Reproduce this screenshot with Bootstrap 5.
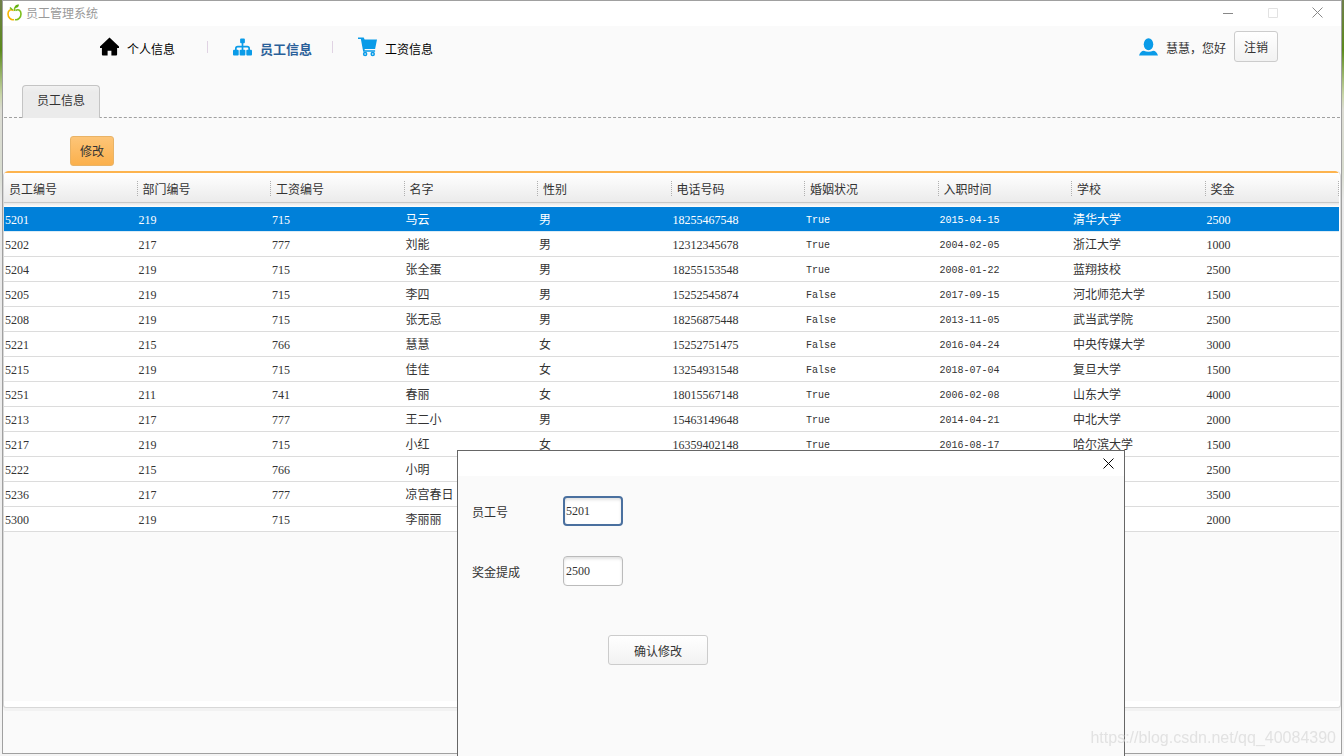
<!DOCTYPE html>
<html lang="zh-CN">
<head>
<meta charset="utf-8">
<meta name="viewport" content="width=device-width, initial-scale=1">
<title>员工管理系统</title>
<link href="https://cdn.jsdelivr.net/npm/bootstrap@5.3.0/dist/css/bootstrap.min.css" rel="stylesheet">
<style>
  body {
    font: 12px/16px "Noto Sans CJK SC", sans-serif;
    color: #333;
    background: linear-gradient(#6f7f4a 0, #5b8a1c 50px, #c9d6a8 95px, #dcdcd4 110px, #d8dccf 170px, #e9e9e9 200px, #f4f4f4 100%);
    padding: 0 2px 2px;
  }
  .app-window { min-height: calc(100vh - 2px); background: #fafafa; border: 1px solid #a0a0a0; }
  .title-bar { height: 25px; background: #fff; color: #999; padding: 0 1px 2px 4px; }
  .win-btn { width: 45px; height: 24px; border: 0; background: none; padding: 0; display: flex; align-items: center; justify-content: center; }
  .top-bar { padding: 5px 63px 0 97px; }
  .main-nav a { color: #000; text-decoration: none; }
  .main-nav .current { color: #2a6099; font-size: 13px; font-weight: 700; }
  .main-nav svg, .user-box svg { flex: none; width: 19px; height: 20px; }
  .main-nav span { padding-top: 5px; }
  .user-box span { padding-top: 2px; }
  .nav-sep { width: 1px; height: 12px; background: #e0d3e3; }
  .nav-sep.wide { margin: 0 25px 0 32px; }
  .nav-sep.tight { margin: 0 25px 0 20px; }
  .btn-soft, .btn-soft:hover {
    font-size: 12px; line-height: 17px; padding: 6px 9px; color: #333;
    border: 1px solid #ccc; border-radius: 3px; background: linear-gradient(#fff, #f2f2f2);
  }
  .btn-edit, .btn-edit:hover {
    font-size: 12px; line-height: 16px; padding: 6px 9px; color: #333;
    border: 1px solid #e9b366; border-radius: 3px; background: linear-gradient(#fdc578, #fbb04c);
  }
  .tab-strip { margin: 23px 1px 0; padding-left: 18px; border-bottom: 1px dashed #a0a0a0; }
  .page-tab {
    position: relative; height: 33px; margin-bottom: -1px; padding: 6px 14px 0; color: #333; text-decoration: none;
    background: linear-gradient(#f2f2f2, #ebebeb 6px); border: 1px solid #c4c4c4; border-bottom: 0; border-radius: 4px 4px 0 0;
  }
  .tool-row { padding: 18px 67px 5px; }
  .grid-panel { background: #fff; border: 1px solid #d8d8d8; border-top: 0; border-radius: 5px 5px 3px 3px; box-shadow: 0 3px 0 #f2f2f2; padding: 0 1px 6px 0; overflow: hidden; }
  .grid-body { min-height: 530px; background: #fafafa; }
  .staff-grid { width: 100%; table-layout: fixed; border-collapse: separate; border-spacing: 0; border-top: 2px solid #fdb44f; border-radius: 4px 4px 0 0; }
  .staff-grid th {
    height: 34px; padding: 0 0 3px 5px; font-weight: 400;
    background:
      repeating-linear-gradient(#b0b0b0 0 1px, transparent 1px 2px) right 8px / 1px 15px no-repeat,
      linear-gradient(#fff, #ebebeb 29px, #c8c8c8 29px, #c8c8c8 30px, #e6e6e6 30px, #fff 34px);
  }
  .staff-grid td {
    height: 25px; padding: 2px 1px 0; white-space: nowrap; background: #fff; border-bottom: 1px solid #dcdcdc;
    font-family: "Liberation Serif", "Noto Sans CJK SC", serif;
  }
  .staff-grid td:nth-child(7), .staff-grid td:nth-child(8) { padding-top: 4px; font-family: "Liberation Mono", monospace; font-size: 10px; }
  .staff-grid .picked td { background: #0080d9; color: #fff; border-bottom-color: #dcecf6; }
  .edit-dialog { position: fixed; left: 34%; top: 450px; bottom: 0; width: 668px; background: #fafafa; border: 1px solid #666; border-bottom: 0; }
  .edit-head { height: 25px; background: #fff; }
  .edit-head button { width: 30px; height: 22px; border: 0; background: none; padding: 0; }
  .edit-form { padding: 20px 14px; gap: 30px; }
  .edit-form label { width: 91px; padding-top: 2px; }
  .edit-form .form-control {
    width: 60px; height: 30px; padding: 0 2px; font: 12px/16px "Liberation Serif", serif; color: #333;
    background: #fff; border: 1px solid #bbb; border-radius: 4px; box-shadow: inset 0 2px 3px #e2e2e2;
  }
  .edit-form .form-control.active-box { border: 2px solid #4a709f; padding: 0 1px; }
  .edit-form .btn-soft { width: 100px; height: 30px; margin: 19px 0 0 136px; }
  .watermark { position: fixed; right: 8px; bottom: 8px; font: 16px/20px "Liberation Sans", sans-serif; color: #e2e2e2; }
</style>
</head>
<body>
<div class="app-window d-flex flex-column">
  <header class="title-bar d-flex align-items-center">
    <svg width="15" height="17" viewBox="0 0 15 17" fill="none" stroke-width="1.6">
      <path d="M6.500 6.500C3 4.500 1 7 1 10c0 3.500 3 6.500 6 5.500" stroke="#f7b500"/>
      <path d="M8.500 6.500c3.500-2 5.500.5 5.500 3.500 0 3.500-3 6.500-6 5.500" stroke="#7cbf1c"/>
      <path d="M7.500 7C7 4 8 3 9 2M5.500 6 3 3.500" stroke="#7cbf1c"/>
      <path d="M8 4c0-3 2-4 4-3.500C12 3 10 4 8 4z" fill="#5fb010"/>
    </svg>
    <span class="ms-1 me-auto">员工管理系统</span>
    <button class="win-btn" aria-label="最小化"><svg width="10" height="10"><path d="M0 5.500h10" stroke="#888"/></svg></button>
    <button class="win-btn" aria-label="最大化"><svg width="10" height="10"><path d="M.5.5h9v9h-9z" fill="none" stroke="#e2e2e2"/></svg></button>
    <button class="win-btn" aria-label="关闭"><svg width="11" height="11"><path d="m.5.5 10 10m0-10-10 10" stroke="#888"/></svg></button>
  </header>

  <div class="top-bar d-flex align-items-center justify-content-between">
    <nav class="main-nav d-flex align-items-center">
      <a href="#" class="d-flex align-items-center gap-2">
        <svg viewBox="0 0 20 20"><path d="M10 0 0 9.500V11h2v7q0 1 1 1h5v-5h4v5h5q1 0 1-1v-7h2V9.500z"/></svg>
        <span>个人信息</span>
      </a>
      <i class="nav-sep wide"></i>
      <a href="#" class="current d-flex align-items-center gap-2">
        <svg viewBox="0 0 20 20" fill="#0a9be8"><rect x="7.500" y="1" width="5" height="5" rx="1"/><rect x="0" y="13" width="6" height="6" rx="1"/><rect x="7" y="13" width="6" height="6" rx="1"/><rect x="14" y="13" width="6" height="6" rx="1"/><path d="M10 5v9M3 14v-2.500q0-2 2-2h10q2 0 2 2V14" fill="none" stroke="#0a9be8" stroke-width="1.800"/></svg>
        <span>员工信息</span>
      </a>
      <i class="nav-sep tight"></i>
      <a href="#" class="d-flex align-items-center gap-2">
        <svg viewBox="0 0 20 20" fill="#0a9be8"><path d="M0 0h6l1 2h13l-2 10H7v1.500h11V15H5.500L3 1.500H0z"/><circle cx="7.500" cy="17.300" r="1.600" fill="#fafafa" stroke="#0a9be8" stroke-width="1.600"/><circle cx="15.500" cy="17.300" r="1.600" fill="#fafafa" stroke="#0a9be8" stroke-width="1.600"/></svg>
        <span>工资信息</span>
      </a>
    </nav>
    <div class="user-box d-flex align-items-center">
      <svg viewBox="0 0 20 20" fill="#0a9be8"><ellipse cx="10" cy="7" rx="5" ry="6.300"/><path d="M0 19c1-3 3-5 5-5 3 1.500 7 1.500 10 0 2 0 4 2 5 5z"/></svg>
      <span class="ms-2 me-1">慧慧，您好</span>
      <button class="btn btn-soft ms-1">注销</button>
    </div>
  </div>

  <div class="tab-strip d-flex"><a href="#" class="page-tab">员工信息</a></div>
  <div class="tool-row"><button class="btn btn-edit">修改</button></div>

  <main class="grid-panel">
    <div class="grid-body">
      <table class="staff-grid">
        <thead>
          <tr><th>员工编号</th><th>部门编号</th><th>工资编号</th><th>名字</th><th>性别</th><th>电话号码</th><th>婚姻状况</th><th>入职时间</th><th>学校</th><th>奖金</th></tr>
        </thead>
        <tbody>
          <tr class="picked"><td>5201</td><td>219</td><td>715</td><td>马云</td><td>男</td><td>18255467548</td><td>True</td><td>2015-04-15</td><td>清华大学</td><td>2500</td></tr>
          <tr><td>5202</td><td>217</td><td>777</td><td>刘能</td><td>男</td><td>12312345678</td><td>True</td><td>2004-02-05</td><td>浙江大学</td><td>1000</td></tr>
          <tr><td>5204</td><td>219</td><td>715</td><td>张全蛋</td><td>男</td><td>18255153548</td><td>True</td><td>2008-01-22</td><td>蓝翔技校</td><td>2500</td></tr>
          <tr><td>5205</td><td>219</td><td>715</td><td>李四</td><td>男</td><td>15252545874</td><td>False</td><td>2017-09-15</td><td>河北师范大学</td><td>1500</td></tr>
          <tr><td>5208</td><td>219</td><td>715</td><td>张无忌</td><td>男</td><td>18256875448</td><td>False</td><td>2013-11-05</td><td>武当武学院</td><td>2500</td></tr>
          <tr><td>5221</td><td>215</td><td>766</td><td>慧慧</td><td>女</td><td>15252751475</td><td>False</td><td>2016-04-24</td><td>中央传媒大学</td><td>3000</td></tr>
          <tr><td>5215</td><td>219</td><td>715</td><td>佳佳</td><td>女</td><td>13254931548</td><td>False</td><td>2018-07-04</td><td>复旦大学</td><td>1500</td></tr>
          <tr><td>5251</td><td>211</td><td>741</td><td>春丽</td><td>女</td><td>18015567148</td><td>True</td><td>2006-02-08</td><td>山东大学</td><td>4000</td></tr>
          <tr><td>5213</td><td>217</td><td>777</td><td>王二小</td><td>男</td><td>15463149648</td><td>True</td><td>2014-04-21</td><td>中北大学</td><td>2000</td></tr>
          <tr><td>5217</td><td>219</td><td>715</td><td>小红</td><td>女</td><td>16359402148</td><td>True</td><td>2016-08-17</td><td>哈尔滨大学</td><td>1500</td></tr>
          <tr><td>5222</td><td>215</td><td>766</td><td>小明</td><td></td><td></td><td></td><td></td><td></td><td>2500</td></tr>
          <tr><td>5236</td><td>217</td><td>777</td><td>凉宫春日</td><td></td><td></td><td></td><td></td><td></td><td>3500</td></tr>
          <tr><td>5300</td><td>219</td><td>715</td><td>李丽丽</td><td></td><td></td><td></td><td></td><td></td><td>2000</td></tr>
        </tbody>
      </table>
    </div>
  </main>
</div>

<section class="edit-dialog" role="dialog" aria-label="修改">
  <div class="edit-head d-flex justify-content-end">
    <button aria-label="关闭"><svg width="11" height="11"><path d="m.5.5 10 10m0-10-10 10" stroke="#000"/></svg></button>
  </div>
  <form class="edit-form d-flex flex-column">
    <div class="d-flex align-items-center"><label for="staff-no">员工号</label><input id="staff-no" class="form-control active-box" type="text" value="5201"></div>
    <div class="d-flex align-items-center"><label for="bonus">奖金提成</label><input id="bonus" class="form-control" type="text" value="2500"></div>
    <button type="button" class="btn btn-soft">确认修改</button>
  </form>
</section>
<div class="watermark">https://blog.csdn.net/qq_40084390</div>
<script src="https://cdn.jsdelivr.net/npm/bootstrap@5.3.0/dist/js/bootstrap.bundle.min.js"></script>
</body>
</html>
